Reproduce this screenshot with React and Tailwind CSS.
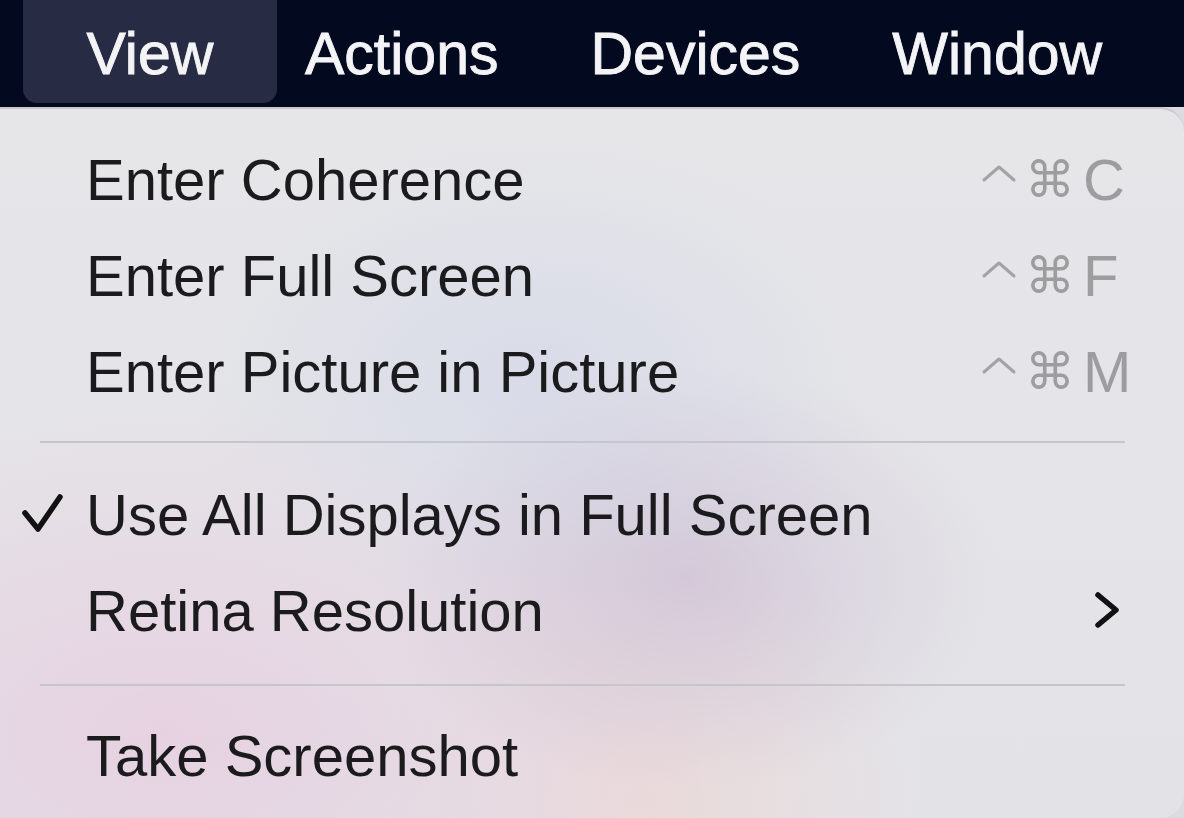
import React from "react";

const font = { fontFamily: "'Liberation Sans', Arial, sans-serif" };

function Shortcut({ letter }) {
  return (
    <div className="flex items-center text-[#9d9d9f]">
      <svg width="36" height="20" viewBox="0 0 36 20" className="mr-[8px] -mt-[12px]">
        <polyline
          points="3,16 18,3 33,16"
          fill="none"
          stroke="#a3a3a5"
          strokeWidth="3"
          strokeLinecap="round"
          strokeLinejoin="round"
        />
      </svg>
      <span
        className="w-[58px] text-[50px] leading-none"
        style={{ fontFamily: "'DejaVu Sans', sans-serif" }}
      >
        ⌘
      </span>
      <span className="w-[42px] text-[58px] leading-none">{letter}</span>
    </div>
  );
}

function Item({ label, shortcut, checked, submenu }) {
  return (
    <div className="relative flex h-[96px] items-center pl-[86px] pr-[59px] text-[58px] text-[#1b1b1d]">
      {checked && (
        <svg
          width="44"
          height="44"
          viewBox="0 0 44 44"
          className="absolute left-[20px] top-[26px]"
        >
          <polyline
            points="5,20 18,36 40,4"
            fill="none"
            stroke="#111"
            strokeWidth="5.5"
            strokeLinecap="round"
            strokeLinejoin="round"
          />
        </svg>
      )}
      <span className="flex-1 leading-none">{label}</span>
      {shortcut && <Shortcut letter={shortcut} />}
      {submenu && (
        <svg width="30" height="44" viewBox="0 0 30 44" className="mr-[2px]">
          <polyline
            points="5,6 23,21 5,36"
            fill="none"
            stroke="#111"
            strokeWidth="5.5"
            strokeLinecap="round"
            strokeLinejoin="round"
          />
        </svg>
      )}
    </div>
  );
}

function Separator({ top, bottom }) {
  return (
    <div className="px-[40px] pr-[59px]" style={{ paddingTop: top, paddingBottom: bottom }}>
      <div className="h-[2px] bg-[#c6c5cb]" />
    </div>
  );
}

export default function App() {
  return (
    <div className="h-[818px] w-[1184px] overflow-hidden bg-[#dcdce0]" style={font}>
      {/* menu bar */}
      <div className="flex h-[107px] items-start bg-[#030a20] text-[59px] leading-[60px] text-[#f4f4f6] [-webkit-text-stroke:0.9px_#f4f4f6]">
        <div className="ml-[23px] flex h-[103px] w-[254px] justify-center rounded-b-[14px] bg-[#272c44] pt-[24px]">
          View
        </div>
        <div className="ml-[28px] flex gap-[92px] pt-[24px]">
          <span>Actions</span>
          <span>Devices</span>
          <span>Window</span>
        </div>
      </div>

      {/* dropdown */}
      <div className="h-[711px] w-[1184px] rounded-r-[24px] border-t-2 border-[#c9c9cc] bg-[radial-gradient(ellipse_at_58%_66%,rgba(198,180,206,0.55),transparent_32%),radial-gradient(ellipse_at_14%_88%,rgba(232,200,222,0.65),transparent_38%),radial-gradient(ellipse_at_55%_98%,rgba(236,214,212,0.7),transparent_30%),radial-gradient(ellipse_at_45%_38%,rgba(206,212,232,0.55),transparent_38%),linear-gradient(#e6e6e9,#e3e3e7)] pt-[23px]">
        <Item label="Enter Coherence" shortcut="C" />
        <Item label="Enter Full Screen" shortcut="F" />
        <Item label="Enter Picture in Picture" shortcut="M" />
        <Separator top="21px" bottom="24px" />
        <Item label="Use All Displays in Full Screen" checked />
        <Item label="Retina Resolution" submenu />
        <Separator top="25px" bottom="22px" />
        <Item label="Take Screenshot" />
      </div>
    </div>
  );
}
